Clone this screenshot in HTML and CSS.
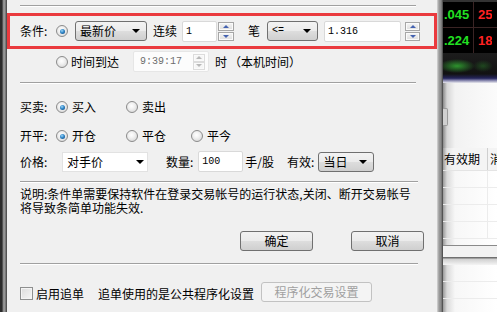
FILE: index.html
```html
<!DOCTYPE html>
<html>
<head>
    <title>条件单</title>
    <link rel="stylesheet" href="styles.css">
</head>
<body>
    <div class="frame-left"></div>

    <div class="dialog">
        <div class="sep sep-top"></div>

        <!-- 条件 row, marked in red -->
        <div class="cond">
            <span class="label">条件:</span>
            <span class="radio on"></span>
            <div class="combo combo-price"><span class="combo-text">最新价</span><span class="arrow"></span></div>
            <span class="txt lianxu">连续</span>
            <div class="input input-count">1</div>
            <div class="spin"><span class="spin-btn"><i class="up"></i></span><span class="spin-btn"><i class="down"></i></span></div>
            <span class="txt bi">笔</span>
            <div class="combo combo-op"><span class="combo-text mono">&lt;=</span><span class="arrow"></span></div>
            <div class="input input-value">1.316</div>
            <div class="spin spin-value"><span class="spin-btn"><i class="up"></i></span><span class="spin-btn"><i class="down"></i></span></div>
        </div>

        <div class="row time-row">
            <span class="radio"></span>
            <span class="txt time-label">时间到达</span>
            <div class="input input-time">
                <span class="time-text">9:39:17</span>
                <div class="spin spin-off"><span class="spin-btn"><i class="up"></i></span><span class="spin-btn"><i class="down"></i></span></div>
            </div>
            <span class="txt shi">时</span>
            <span class="txt local">（本机时间）</span>
        </div>

        <div class="sep sep-mid"></div>

        <div class="row row-side">
            <span class="label">买卖:</span>
            <span class="opt opt-1"><span class="radio on"></span><span class="txt">买入</span></span>
            <span class="opt"><span class="radio"></span><span class="txt">卖出</span></span>
        </div>

        <div class="row row-open">
            <span class="label">开平:</span>
            <span class="opt opt-1"><span class="radio on"></span><span class="txt">开仓</span></span>
            <span class="opt opt-2"><span class="radio"></span><span class="txt">平仓</span></span>
            <span class="opt"><span class="radio"></span><span class="txt">平今</span></span>
        </div>

        <div class="row row-price">
            <span class="label label-price">价格:</span>
            <div class="combo combo-flat"><span class="combo-text">对手价</span><span class="arrow"></span></div>
            <span class="txt qty">数量:</span>
            <div class="input input-qty">100</div>
            <span class="txt unit">手/股</span>
            <span class="txt valid">有效:</span>
            <div class="combo combo-day"><span class="combo-text">当日</span><span class="arrow"></span></div>
        </div>

        <div class="sep sep-price"></div>

        <p class="note">说明:条件单需要保持软件在登录交易帐号的运行状态,关闭、断开交易帐号<br>将导致条简单功能失效.</p>

        <div class="buttons">
            <button class="btn">确定</button>
            <button class="btn">取消</button>
        </div>

        <div class="sep sep-bottom"></div>

        <div class="row row-follow">
            <span class="check"></span>
            <span class="txt follow">启用追单</span>
            <span class="txt follow-note">追单使用的是公共程序化设置</span>
            <button class="btn btn-off">程序化交易设置</button>
        </div>
    </div>

    <div class="frame-right"></div>

    <!-- trading window behind the dialog -->
    <div class="behind">
        <div class="quote">
            <div class="quote-row">
                <span class="cell cell-green">.045</span>
                <span class="cell cell-red">25</span>
            </div>
            <div class="quote-row">
                <span class="cell cell-green">.224</span>
                <span class="cell cell-red">18</span>
            </div>
        </div>
        <div class="glow"></div>
        <div class="upper"><span class="handle"></span></div>
        <div class="grid-head">
            <span class="head-cell">有效期</span>
            <span class="head-cell head-next">消</span>
        </div>
        <div class="grid">
            <div class="grid-row"></div>
            <div class="grid-row"></div>
            <div class="grid-row"></div>
            <div class="grid-row"></div>
        </div>
        <div class="bar"></div>
        <div class="lower">
            <div class="lower-row"></div>
            <div class="lower-row"></div>
        </div>
    </div>
</body>
</html>
```

FILE: styles.css
```css
body {
    margin: 0;
    padding: 0;
    width: 497px;
    height: 312px;
    overflow: hidden;
    display: flex;
    font-family: "Noto Sans CJK SC", sans-serif;
    font-size: 12px;
    color: #000;
}

.frame-left {
    width: 7px;
    flex: none;
    background: linear-gradient(to right, #2b2b2b 0, #2b2b2b 2px, #777 3px, #a4a4a4 4px, #6a6a6a 6px, #3a3a3a 7px);
}

.frame-right {
    width: 6px;
    flex: none;
    background: linear-gradient(to right, #d8d8d8 0, #9c9c9c 2px, #8a8a8a 4px, #6a6a6a 5px, #3c3c3c 6px);
}

.dialog {
    width: 430px;
    flex: none;
    background-color: #f0f0f0;
    display: flex;
    flex-direction: column;
}

.txt, .label {
    line-height: 16px;
    white-space: nowrap;
}

.mono {
    font-family: "Liberation Mono", monospace;
    font-size: 10px;
}

/* etched separator lines */
.sep {
    height: 0;
    margin-left: 13px;
    margin-right: 21px;
    border-top: 1px solid #a0a0a0;
    border-bottom: 1px solid #fff;
}

.sep-top { margin-top: 5px; }
.sep-mid { margin-top: 10px; }
.sep-price { margin-top: 9px; margin-right: 19px; }
.sep-bottom { margin-top: 12px; margin-right: 19px; }

/* red highlighted condition row */
.cond {
    margin-top: 6px;
    height: 36px;
    box-sizing: border-box;
    border: 3px solid #ea3a3e;
    display: flex;
    align-items: center;
    padding-left: 10px;
}

.row {
    display: flex;
    align-items: center;
    padding-left: 13px;
}

.label {
    width: 36px;
    flex: none;
}

.radio {
    width: 10px;
    height: 10px;
    flex: none;
    border: 1px solid #8b8b8b;
    border-radius: 50%;
    background: radial-gradient(circle at 45% 40%, #fff 0, #f2f2f2 35%, #cfcfcf 100%);
    display: flex;
    align-items: center;
    justify-content: center;
}

.radio.on::after {
    content: "";
    width: 5px;
    height: 5px;
    border-radius: 50%;
    background: radial-gradient(circle at 40% 35%, #9fd6f7 0, #2f86c8 45%, #0c3f74 100%);
}

.combo {
    height: 20px;
    box-sizing: border-box;
    border: 1px solid #707070;
    border-radius: 3px;
    background: linear-gradient(#f3f3f3, #ebebeb 48%, #dddddd 52%, #cfcfcf);
    display: flex;
    align-items: center;
    justify-content: space-between;
    padding: 0 6px 0 4px;
    flex: none;
}

.combo-text {
    line-height: 16px;
}

.arrow {
    width: 0;
    height: 0;
    border-left: 4px solid transparent;
    border-right: 4px solid transparent;
    border-top: 4px solid #000;
}

.combo-price { width: 72px; margin-left: 7px; }
.combo-op { width: 51px; margin-left: 7px; }

.combo-flat {
    width: 86px;
    border: 1px solid #e2e2e2;
    border-radius: 0;
    background: #fff;
    margin-left: 3px;
    padding-right: 3px;
}

.combo-day { width: 56px; margin-left: 4px; }

.input {
    height: 21px;
    box-sizing: border-box;
    border: 1px solid #d9d9d9;
    border-radius: 2px;
    background: #fff;
    padding: 2px 3px;
    font-family: "Liberation Mono", monospace;
    font-size: 10px;
    line-height: 15px;
    flex: none;
}

.input-count { width: 35px; margin-left: 5px; }
.input-value { width: 77px; margin-left: 6px; }
.input-qty { width: 45px; margin-left: 5px; }

.spin {
    width: 16px;
    height: 19px;
    display: flex;
    flex-direction: column;
    justify-content: space-between;
    margin-left: 1px;
    flex: none;
}

.spin-value { width: 15px; margin-left: 4px; }

.spin-btn {
    height: 9px;
    box-sizing: border-box;
    border: 1px solid #a6a6a6;
    box-shadow: inset 0 0 0 1px #fafafa;
    background: linear-gradient(#f4f4f4, #dedede);
    display: flex;
    align-items: center;
    justify-content: center;
}

.up, .down {
    width: 0;
    height: 0;
    border-left: 3px solid transparent;
    border-right: 3px solid transparent;
}

.up { border-bottom: 3px solid #4462b0; }
.down { border-top: 3px solid #4462b0; }

.spin-off {
    width: 12px;
    height: 16px;
    margin-left: auto;
}

.spin-off .spin-btn {
    height: 8px;
    border-color: #dcdcdc;
    background: #f6f6f6;
}

.spin-off .up { border-bottom-color: #b8b8b8; }
.spin-off .down { border-top-color: #b8b8b8; }

.lianxu { margin-left: 6px; }
.bi { margin-left: 14px; }

/* time row */
.time-row {
    margin-top: 2px;
    height: 21px;
    padding-left: 49px;
}

.time-label { margin-left: 3px; }

.input-time {
    width: 76px;
    margin-left: 14px;
    border-color: #e6e6e6;
    background: #fcfcfc;
    display: flex;
    align-items: center;
    padding: 0 3px 0 6px;
    color: #6d6d6d;
}

.shi { margin-left: 6px; }
.local { margin-left: 2px; }

/* side / offset rows */
.row-side { margin-top: 13px; height: 20px; }
.row-open { margin-top: 9px; height: 20px; }

.opt {
    display: flex;
    align-items: center;
    gap: 4px;
    width: 65px;
    flex: none;
}

.opt-1 { width: 70px; }

.row-price { margin-top: 5px; height: 21px; }
.label-price { width: 39px; }

.qty { margin-left: 18px; }
.unit { margin-left: 2px; }
.valid { margin-left: 13px; }

.note {
    margin: 4px 0 0 13px;
    line-height: 14px;
    white-space: nowrap;
}

.buttons {
    margin-top: 16px;
    display: flex;
    justify-content: flex-end;
    gap: 38px;
    padding-right: 13px;
}

.btn {
    width: 73px;
    height: 20px;
    box-sizing: border-box;
    border: 1px solid #707070;
    border-radius: 3px;
    background: linear-gradient(#f2f2f2, #ebebeb 48%, #dddddd 52%, #cfcfcf);
    font-family: "Noto Sans CJK SC", sans-serif;
    font-size: 12px;
    line-height: 16px;
    padding: 0;
    color: #000;
}

.row-follow { margin-top: 17px; height: 20px; }

.check {
    width: 11px;
    height: 11px;
    flex: none;
    border: 1px solid #8e8f8f;
    background: linear-gradient(135deg, #dcdcdc, #f6f6f6);
    box-shadow: inset 0 0 0 1px #f4f4f4;
    margin-top: 3px;
}

.follow { margin-left: 3px; margin-top: 3px; }
.follow-note { margin-left: 14px; margin-top: 3px; }

.btn-off {
    width: 111px;
    margin-left: 7px;
    border-color: #c2c2c2;
    background: #f4f4f4;
    color: #a0a0a0;
}

/* window behind the dialog */
.behind {
    flex: 1;
    display: flex;
    flex-direction: column;
    overflow: hidden;
    background: #fff;
}

.quote {
    height: 53px;
    background: #000;
    border-top: 2px solid #333;
    box-sizing: border-box;
}

.quote-row {
    height: 25px;
    display: flex;
    border-bottom: 1px solid #3a2424;
}

.cell {
    font-family: "Liberation Sans", sans-serif;
    font-size: 13px;
    font-weight: bold;
    line-height: 25px;
    white-space: nowrap;
    overflow: hidden;
}

.cell-green {
    width: 31px;
    flex: none;
    color: #22e022;
    border-right: 1px solid #3a2424;
    padding-left: 1px;
    box-sizing: border-box;
}

.cell-red {
    color: #ff2222;
    padding-left: 4px;
}

.glow {
    height: 30px;
    background:
        radial-gradient(ellipse 18px 7px at 14px 13px, rgba(50, 170, 50, 0.85), rgba(50, 170, 50, 0)),
        radial-gradient(ellipse 10px 6px at 40px 13px, rgba(40, 120, 40, 0.5), rgba(40, 120, 40, 0)),
        linear-gradient(#1c1c1c, #121212 70%, #24245a 84%, #8a8ab0 92%, #e8e8ee);
}

.upper {
    height: 65px;
    background: linear-gradient(to right, #8a8a8a, #d6d6d6 4px, #f2f2f2 12px, #fbfbfb);
    display: flex;
    align-items: center;
}

.handle {
    width: 4px;
    height: 16px;
    border: 1px solid #9a9a9a;
    border-left: none;
    border-radius: 0 2px 2px 0;
    background: #d0d0d0;
    margin-top: 2px;
}

.grid-head {
    height: 22px;
    display: flex;
    background: linear-gradient(to right, #9a9a9a, #e4e4e4 4px, #f4f4f4 10px);
    border-bottom: 1px solid #e4e4e4;
}

.head-cell {
    line-height: 22px;
    white-space: nowrap;
    overflow: hidden;
}

.head-cell:first-child {
    width: 45px;
    flex: none;
    padding-left: 1px;
    box-sizing: border-box;
    border-right: 1px solid #cfcfcf;
}

.head-next { padding-left: 2px; }

.grid {
    height: 74px;
    background: linear-gradient(to right, #9a9a9a, #dadada 4px, #f7f7f7 12px, #fff);
}

.grid-row {
    height: 16px;
    border-bottom: 1px solid #ececec;
    background: linear-gradient(to right, transparent 44px, #ececec 44px, #ececec 45px, transparent 45px);
}

.bar {
    height: 20px;
    box-sizing: border-box;
    border-top: 1px solid #8a8a8a;
    background: linear-gradient(#f2f2f2 0, #f2f2f2 11px, #707070 11px, #707070 12px, #cfcfcf 13px, #f4f4f4 19px);
}

.lower {
    flex: 1;
    background: linear-gradient(to right, #9a9a9a, #dadada 4px, #f7f7f7 12px, #fff);
}

.lower-row {
    height: 16px;
    border-bottom: 1px solid #ececec;
}
```
